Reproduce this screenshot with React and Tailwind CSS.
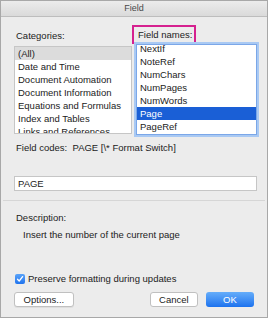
import React from "react";

const categories = [
	"(All)",
	"Date and Time",
	"Document Automation",
	"Document Information",
	"Equations and Formulas",
	"Index and Tables",
	"Links and References",
];

const fieldNames = ["NextIf", "NoteRef", "NumChars", "NumPages", "NumWords", "Page", "PageRef"];

export default function App() {
	return (
		<div
			className="w-[271px] h-[320px] bg-white text-[9.5px] text-[#222]"
			style={{ fontFamily: '"Liberation Sans", Arial, sans-serif' }}
		>
			<div className="w-[268px] h-[318px] border border-[#a8a8a8] bg-[#ececec] flex flex-col">
				{/* title bar */}
				<div className="h-[16px] shrink-0 border-b border-[#bdbdbd] bg-gradient-to-b from-[#ececec] to-[#dadada] flex items-center justify-center text-[9px] text-[#4a4a4a] leading-none">
					Field
				</div>

				<div className="flex flex-col px-[13px]">
					{/* lists */}
					<div className="flex mt-[8px]">
						<div className="w-[119px] flex flex-col">
							<div className="h-[19px] flex items-center pl-[2px] pt-[3px]">Categories:</div>
							<div className="mt-[2px] w-[118px] h-[88px] border border-[#c6c6c6] bg-white overflow-hidden">
								{categories.map((c, i) => (
									<div
										key={c}
										className={`h-[13px] leading-[13px] pl-[3px] whitespace-nowrap ${i === 0 ? "bg-[#dcdcdc]" : ""}`}
									>
										{c}
									</div>
								))}
							</div>
						</div>

						<div className="flex flex-col">
							<div className="w-[64px] h-[19px] border-2 border-[#d5218f] flex items-center pl-[4px] pt-[2px] whitespace-nowrap">
								Field names:
							</div>
							<div className="ml-[4px] w-[121px] h-[91px] border border-[#7ba7e8] shadow-[0_0_0_2px_#a9c9f3] bg-white overflow-hidden">
								<div className="mt-[-3px]">
									{fieldNames.map((f) => (
										<div
											key={f}
											className={`h-[13px] leading-[13px] pl-[3px] ${f === "Page" ? "bg-[#1a5fd6] text-white" : ""}`}
										>
											{f}
										</div>
									))}
								</div>
							</div>
						</div>
					</div>

					{/* field codes */}
					<div className="mt-[6px] pl-[2px] h-[14px] leading-[14px]">
						Field codes:&nbsp; PAGE [\* Format Switch]
					</div>

					<div className="mt-[21px] w-[243px] h-[15px] border border-[#c6c6c6] bg-white pl-[3px] leading-[13px]">
						PAGE
					</div>
				</div>

				<div className="mt-[9px] mx-[2px] h-px bg-[#d6d6d6]" />

				<div className="flex flex-col px-[13px]">
					<div className="mt-[10px] pl-[2px] leading-[14px]">Description:</div>
					<div className="mt-[3px] pl-[9px] leading-[14px]">Insert the number of the current page</div>

					{/* checkbox */}
					<div className="mt-[30px] flex items-center gap-[3px] pl-[1px]">
						<div className="w-[10px] h-[10px] rounded-[2px] bg-gradient-to-b from-[#5aa3f8] to-[#1f73ee] flex items-center justify-center">
							<svg width="8" height="8" viewBox="0 0 8 8">
								<path d="M1.5 4.2 L3.2 6 L6.6 1.6" fill="none" stroke="white" strokeWidth="1.3" strokeLinecap="round" strokeLinejoin="round" />
							</svg>
						</div>
						<span className="leading-[14px]">Preserve formatting during updates</span>
					</div>

					{/* buttons */}
					<div className="mt-[6px] flex items-center">
						<button className="w-[61px] h-[15px] rounded-[3px] border border-[#c0c0c0] bg-white text-[#222] leading-[13px] shadow-[0_1px_0_rgba(0,0,0,0.06)]">
							Options...
						</button>
						<button className="ml-[76px] w-[49px] h-[15px] rounded-[3px] border border-[#c0c0c0] bg-white text-[#222] leading-[13px]">
							Cancel
						</button>
						<button className="ml-[8px] w-[49px] h-[15px] rounded-[3px] bg-gradient-to-b from-[#65adfa] to-[#1b72ee] text-white leading-[15px]">
							OK
						</button>
					</div>
				</div>
			</div>
		</div>
	);
}
